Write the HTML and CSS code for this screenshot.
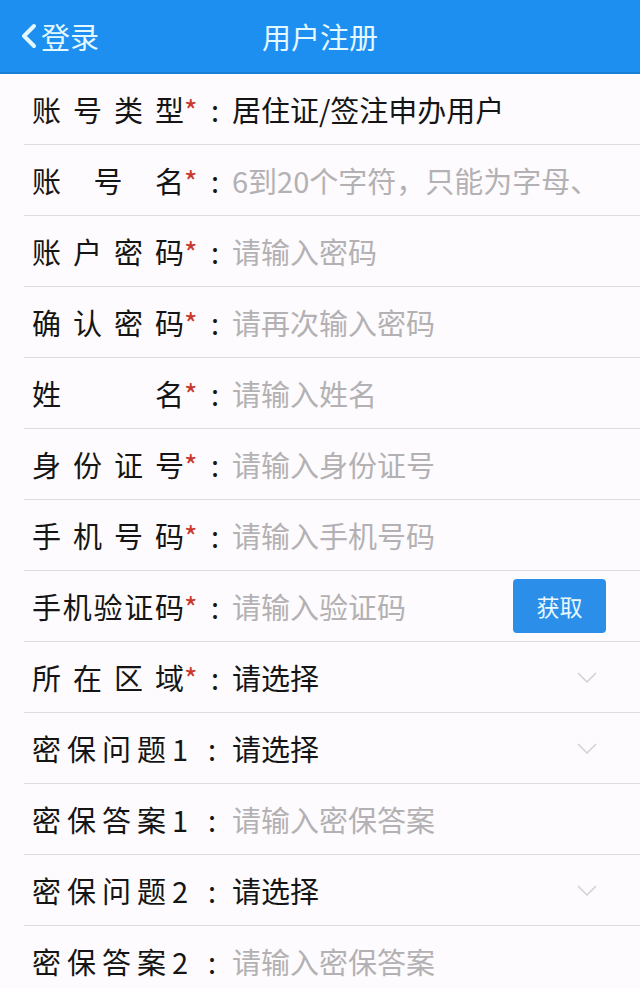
FILE: index.html
```html
<!DOCTYPE html>
<html lang="zh-CN">
<head>
    <meta charset="UTF-8">
    <meta name="viewport" content="width=device-width, initial-scale=1.0">
    <title>用户注册</title>
    <link rel="stylesheet" href="styles.css">
</head>

<body>
    <header class="topbar">
        <a class="back" href="#">
            <svg class="back-icon" width="16" height="26" viewBox="0 0 16 26">
                <polyline points="13,3 3,13 13,23" fill="none" stroke="currentColor" stroke-width="4" stroke-linecap="round" stroke-linejoin="round"/>
            </svg>
            <span>登录</span>
        </a>
        <h1>用户注册</h1>
        <span></span>
    </header>

    <div class="form">
        <div class="row">
            <span class="label">账号类型</span><span class="star">*</span><span class="colon">:</span>
            <span class="value">居住证/签注申办用户</span>
        </div>
        <div class="row">
            <span class="label">账号名</span><span class="star">*</span><span class="colon">:</span>
            <input class="value" type="text" placeholder="6到20个字符，只能为字母、">
        </div>
        <div class="row">
            <span class="label">账户密码</span><span class="star">*</span><span class="colon">:</span>
            <input class="value" type="password" placeholder="请输入密码">
        </div>
        <div class="row">
            <span class="label">确认密码</span><span class="star">*</span><span class="colon">:</span>
            <input class="value" type="password" placeholder="请再次输入密码">
        </div>
        <div class="row">
            <span class="label">姓名</span><span class="star">*</span><span class="colon">:</span>
            <input class="value" type="text" placeholder="请输入姓名">
        </div>
        <div class="row">
            <span class="label">身份证号</span><span class="star">*</span><span class="colon">:</span>
            <input class="value" type="text" placeholder="请输入身份证号">
        </div>
        <div class="row">
            <span class="label">手机号码</span><span class="star">*</span><span class="colon">:</span>
            <input class="value" type="text" placeholder="请输入手机号码">
        </div>
        <div class="row">
            <span class="label">手机验证码</span><span class="star">*</span><span class="colon">:</span>
            <input class="value" type="text" placeholder="请输入验证码">
            <button class="code-btn">获取</button>
        </div>
        <div class="row">
            <span class="label">所在区域</span><span class="star">*</span><span class="colon">:</span>
            <span class="value">请选择</span>
            <svg class="arrow" width="20" height="11" viewBox="0 0 20 11"><polyline points="1,1 10,10 19,1" fill="none" stroke="#d2d2d2" stroke-width="1.5"/></svg>
        </div>
        <div class="row">
            <span class="label numbered">密保问题1</span><span class="colon short">:</span>
            <span class="value">请选择</span>
            <svg class="arrow" width="20" height="11" viewBox="0 0 20 11"><polyline points="1,1 10,10 19,1" fill="none" stroke="#d2d2d2" stroke-width="1.5"/></svg>
        </div>
        <div class="row">
            <span class="label numbered">密保答案1</span><span class="colon short">:</span>
            <input class="value" type="text" placeholder="请输入密保答案">
        </div>
        <div class="row">
            <span class="label numbered">密保问题2</span><span class="colon short">:</span>
            <span class="value">请选择</span>
            <svg class="arrow" width="20" height="11" viewBox="0 0 20 11"><polyline points="1,1 10,10 19,1" fill="none" stroke="#d2d2d2" stroke-width="1.5"/></svg>
        </div>
        <div class="row">
            <span class="label numbered">密保答案2</span><span class="colon short">:</span>
            <input class="value" type="text" placeholder="请输入密保答案">
        </div>
    </div>
</body>
</html>
```

FILE: styles.css
```css
body {
    font-family: "Noto Sans CJK SC", "Noto Sans", sans-serif;
    background-color: #fdfbfd;
    color: #151515;
    margin: 0;
    padding: 0;
}

.topbar {
    display: grid;
    grid-template-columns: 1fr auto 1fr;
    align-items: center;
    height: 72px;
    background-color: #1d8ff0;
    border-bottom: 2px solid #1a7fd6;
    color: #e3f8ff;
}

.back {
    display: flex;
    align-items: center;
    gap: 4px;
    padding-left: 21px;
    color: #e3f8ff;
    text-decoration: none;
    font-size: 29px;
}

.topbar h1 {
    margin: 0;
    font-size: 29px;
    font-weight: normal;
}

.row {
    display: flex;
    align-items: center;
    height: 70px;
    margin-left: 24px;
    padding-left: 8px;
    padding-right: 34px;
    border-bottom: 1px solid #dedcde;
    font-size: 29px;
}

.label {
    width: 152px;
    flex: none;
    text-align: justify;
    text-align-last: justify;
    white-space: nowrap;
}

/* Ziffer am Ende: kein Blocksatz zwischen Zeichen, daher Abstand per letter-spacing */
.label.numbered {
    width: 160px;
    text-align-last: left;
    letter-spacing: 6px;
}

.star {
    width: 14px;
    flex: none;
    color: #c8382c;
}

.colon {
    width: 34px;
    flex: none;
    text-align: center;
}

.colon.short {
    width: 40px;
}

.value {
    flex: 1;
    min-width: 0;
    font-family: inherit;
    font-size: 29px;
    color: #151515;
    white-space: nowrap;
    overflow: hidden;
}

input.value {
    border: none;
    outline: none;
    background: none;
    padding: 0;
    margin: 0;
}

input.value::placeholder {
    color: #b3b1b3;
}

.code-btn {
    flex: none;
    width: 93px;
    height: 54px;
    border: none;
    border-radius: 4px;
    background-color: #2b8fe9;
    color: #e8f8ff;
    font-family: inherit;
    font-size: 23px;
    cursor: pointer;
}

.arrow {
    flex: none;
    margin-right: 9px;
}
```
